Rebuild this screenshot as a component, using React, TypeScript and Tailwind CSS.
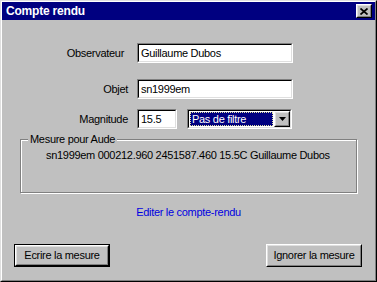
const FONT = "font-['Liberation_Sans',Arial,sans-serif]";

function Sunken({ className, children }: { className: string; children?: React.ReactNode }) {
  return (
    <div className={`border border-t-[#808080] border-l-[#808080] border-r-white border-b-white ${className}`}>
      <div className="h-full border border-t-black border-l-black border-r-[#dfdfdf] border-b-[#dfdfdf] bg-white flex">
        {children}
      </div>
    </div>
  );
}

function Raised({ className, children }: { className: string; children?: React.ReactNode }) {
  return (
    <div className={`border border-t-white border-l-white border-r-black border-b-black ${className}`}>
      <div className="h-full border border-t-[#dfdfdf] border-l-[#dfdfdf] border-r-[#808080] border-b-[#808080] bg-[#c0c0c0] flex items-center justify-center">
        {children}
      </div>
    </div>
  );
}

function Field({ label, value, width, labelPad = "" }: { label: string; value: string; width: string; labelPad?: string }) {
  return (
    <div className="flex items-center">
      <div className={`w-[126px] text-right ${labelPad}`}>{label}</div>
      <Sunken className={`ml-[9px] h-[20px] ${width}`}>
        <span className="px-[2px] self-center">{value}</span>
      </Sunken>
    </div>
  );
}

export default function App() {
  return (
    <div className={`w-[377px] h-[282px] bg-[#c0c0c0] text-[11px] leading-[13px] tracking-[-0.3px] text-black ${FONT}`}>
      <div className="h-full border border-t-[#dfdfdf] border-l-[#dfdfdf] border-r-black border-b-black">
        <div className="h-full border border-t-white border-l-white border-r-[#808080] border-b-[#808080] flex flex-col">
          {/* title bar */}
          <div className="h-[18px] bg-[#000080] flex items-center justify-between pl-[4px] pr-[3px]">
            <span className="text-white font-bold text-[12px] tracking-[-0.2px]">Compte rendu</span>
            <Raised className="w-[16px] h-[14px]">
              <svg width="8" height="7" viewBox="0 0 8 7">
                <path d="M0.5 0.5L7.5 6.5M7.5 0.5L0.5 6.5" stroke="black" strokeWidth="1.7" />
              </svg>
            </Raised>
          </div>

          <div className="mt-[23px]">
            <Field label="Observateur" value="Guillaume Dubos" width="w-[156px]" labelPad="pr-[4px]" />
          </div>
          <div className="mt-[16px]">
            <Field label="Objet" value="sn1999em" width="w-[156px]" />
          </div>

          {/* magnitude + filter */}
          <div className="mt-[10px] flex items-center">
            <div className="w-[126px] text-right">Magnitude</div>
            <Sunken className="ml-[9px] h-[20px] w-[40px]">
              <span className="px-[2px] self-center">15.5</span>
            </Sunken>
            <Sunken className="ml-[10px] h-[20px] w-[105px]">
              <div className="flex-1 m-[1px] bg-[#000080] border border-dotted border-[#e0e0a0] flex items-center">
                <span className="text-white pl-[1px]">Pas de filtre</span>
              </div>
              <Raised className="w-[16px] h-full">
                <svg width="7" height="4" viewBox="0 0 7 4">
                  <path d="M0 0H7L3.5 4Z" fill="black" />
                </svg>
              </Raised>
            </Sunken>
          </div>

          {/* group box */}
          <div className="relative mt-[10px] ml-[18px] w-[337px] h-[54px] border border-[#808080] shadow-[1px_1px_0_#fff,inset_1px_1px_0_#fff]">
            <span className="absolute -top-[7px] left-[7px] px-[2px] bg-[#c0c0c0]">Mesure pour Aude</span>
            <div className="pt-[9px] pl-[25px]">sn1999em 000212.960 2451587.460 15.5C Guillaume Dubos</div>
          </div>

          <div className="mt-[13px] text-center text-[#0000e0]">Editer le compte-rendu</div>

          <div className="mt-[25px] flex justify-between pl-[12px] pr-[13px]">
            <div className="w-[96px] h-[23px] border border-black">
              <Raised className="h-full">
                <span>Ecrire la mesure</span>
              </Raised>
            </div>
            <Raised className="w-[96px] h-[23px]">
              <span>Ignorer la mesure</span>
            </Raised>
          </div>
        </div>
      </div>
    </div>
  );
}
